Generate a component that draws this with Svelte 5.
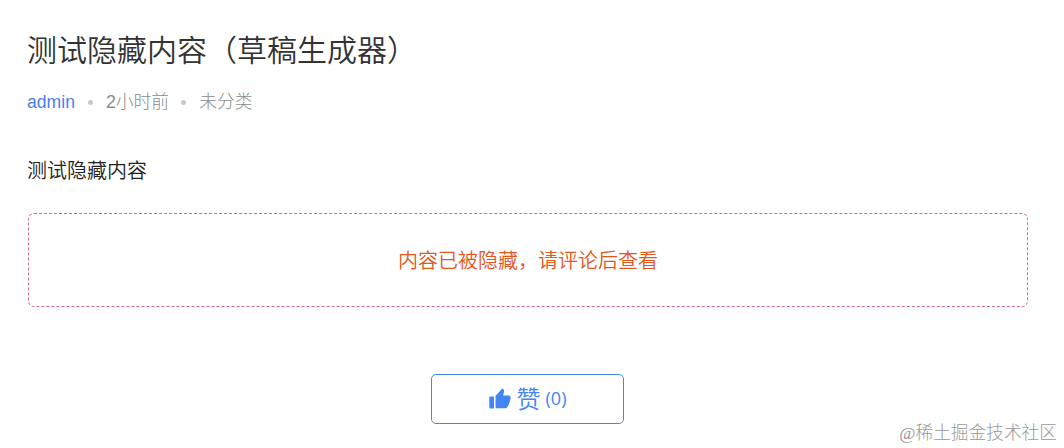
<script lang="ts">
	export let likes = 0;

	const meta = ['2小时前', '未分类'];

	function like() {
		likes += 1;
	}
</script>

<main class="post">
	<h1 class="post-title">测试隐藏内容（草稿生成器）</h1>

	<div class="post-meta">
		<span class="author">admin</span>
		{#each meta as item}
			<i class="dot"></i>
			<span>{item}</span>
		{/each}
	</div>

	<p class="post-text">测试隐藏内容</p>

	<div class="hidden-content">内容已被隐藏，请评论后查看</div>

	<button class="like" on:click={like}>
		<svg viewBox="0 0 22 22" width="22" height="22">
			<path
				fill="currentColor"
				d="M1 8.500h3.300q.7 0 .7.700v10.600q0 .7-.7.700H1q-.7 0-.7-.7v-10.600q0-.7.7-.7z"
			/>
			<path
				fill="currentColor"
				d="M6.500 8.700q0-.7.5-1.200L12.700 .9q.5-.6 1.100-.2c1.200.8 1.500 1.700 1.200 3l-.9 3.900h5.300c1.700 0 2.500 1.300 2.200 2.700-.5 3-1.500 5.800-3 8.500-.5.9-1.100 1.500-2 1.500H8q-1.500 0-1.500-1.500z"
			/>
		</svg>
		<span class="like-label">赞</span>
		<span class="like-count">({likes})</span>
	</button>

	<span class="watermark">@稀土掘金技术社区</span>
</main>

<style>
	:global(body) {
		background: #fff;
	}

	.post {
		position: relative;
		box-sizing: border-box;
		height: 448px;
		padding: 29px 36px 0 27px;
		overflow: hidden;
		color: #333;
		font-family: 'Liberation Sans', 'Noto Sans CJK SC', sans-serif;
	}

	.post-title {
		margin: 0;
		font-size: 30px;
		font-weight: 350;
		line-height: 44px;
	}

	.post-meta {
		display: flex;
		align-items: center;
		margin-top: 16px;
		color: #8c8c8c;
		font-size: 17.800px;
		font-weight: 300;
		line-height: 26px;
	}

	.author {
		color: #4a7fec;
		font-size: 17.600px;
	}

	.dot {
		width: 5px;
		height: 5px;
		margin: 0 13px;
		border-radius: 50%;
		background: #c8c8c8;
	}

	.dot:last-of-type {
		margin-left: 12px;
	}

	.post-text {
		margin: 41px 0 0;
		color: #222;
		font-size: 20px;
		font-weight: 350;
		line-height: 30px;
	}

	.hidden-content {
		box-sizing: border-box;
		height: 94px;
		margin: 27px 0 0 1px;
		border: 1px dashed #cf6b8e;
		border-radius: 6px;
		color: #e2571e;
		font-size: 20px;
		font-weight: 350;
		line-height: 95px;
		text-align: center;
	}

	.like {
		display: flex;
		align-items: center;
		justify-content: center;
		box-sizing: border-box;
		width: 193px;
		height: 50px;
		margin: 67px auto 0;
		padding: 0;
		border: 1px solid #4a86e8;
		border-radius: 5px;
		background: #fff;
		color: #4285f4;
		font-family: inherit;
		cursor: pointer;
	}

	.like-label {
		margin: -3px 5px 0 6px;
		font-size: 24px;
		font-weight: 350;
	}

	.like-count {
		margin-top: -2px;
		font-family: 'Open Sans', sans-serif;
		font-size: 18px;
	}

	/* Site mark over the bottom corner */
	.watermark {
		position: absolute;
		right: 7px;
		bottom: 2px;
		color: #999;
		font-family: 'Liberation Serif', 'Noto Sans CJK SC', serif;
		font-size: 17.700px;
		font-weight: 300;
		line-height: 26px;
	}
</style>
